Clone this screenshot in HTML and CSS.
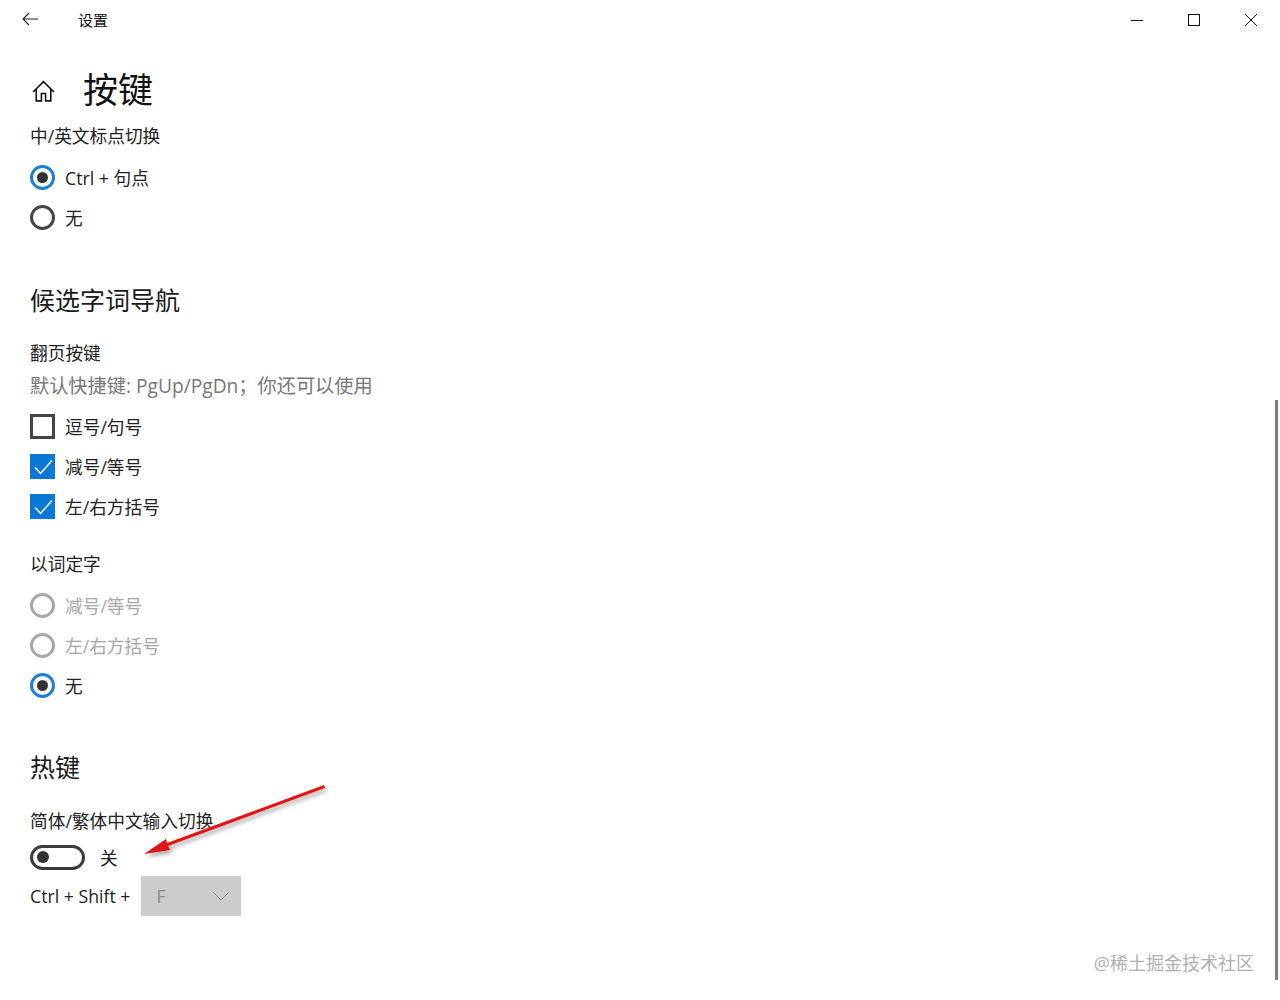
FILE: index.html
```html
<!DOCTYPE html>
<html lang="zh-CN">
<head>
  <meta charset="UTF-8">
  <title>设置</title>
  <link rel="stylesheet" href="styles.css">
</head>
<body>

<div class="window">
  <div class="titlebar">
    <svg class="back-icon" width="16" height="14" viewBox="0 0 16 14"><path d="M7 1 1 7l6 6M1 7h15" fill="none" stroke="#222" stroke-width="1.1"/></svg>
    <span class="app-name">设置</span>
    <div class="window-controls">
      <svg width="12" height="12" viewBox="0 0 12 12"><path d="M0 6.5h12" stroke="#111" stroke-width="1"/></svg>
      <svg width="12" height="12" viewBox="0 0 12 12"><rect x="0.5" y="0.5" width="11" height="11" fill="none" stroke="#111" stroke-width="1"/></svg>
      <svg width="12" height="12" viewBox="0 0 12 12"><path d="M0 0l12 12M12 0 0 12" stroke="#111" stroke-width="1"/></svg>
    </div>
  </div>

  <div class="content">
    <div class="page-header">
      <svg class="home-icon" width="25" height="25" viewBox="0 0 24 24"><path d="M2 12.500 12 2.500l10 10M5 10v11h5v-7h4v7h5V10" fill="none" stroke="#111" stroke-width="1.500"/></svg>
      <h1>按键</h1>
    </div>

    <div class="label label-group">中/英文标点切换</div>
    <div class="option"><span class="radio on"></span>Ctrl + 句点</div>
    <div class="option"><span class="radio"></span>无</div>

    <h2 class="section-first">候选字词导航</h2>
    <div class="label">翻页按键</div>
    <div class="hint">默认快捷键: PgUp/PgDn；你还可以使用</div>
    <div class="option"><span class="check"></span>逗号/句号</div>
    <div class="option"><span class="check on"><svg width="26" height="26" viewBox="0 0 26 26"><path d="M5 13.500l5.500 6L22 6.500" fill="none" stroke="#fff" stroke-width="1.500"/></svg></span>减号/等号</div>
    <div class="option"><span class="check on"><svg width="26" height="26" viewBox="0 0 26 26"><path d="M5 13.500l5.500 6L22 6.500" fill="none" stroke="#fff" stroke-width="1.500"/></svg></span>左/右方括号</div>

    <div class="label label-gap">以词定字</div>
    <div class="option disabled"><span class="radio"></span>减号/等号</div>
    <div class="option disabled"><span class="radio"></span>左/右方括号</div>
    <div class="option"><span class="radio on"></span>无</div>

    <h2 class="section-second">热键</h2>
    <div class="label">简体/繁体中文输入切换</div>
    <div class="toggle-row"><span class="toggle"></span>关</div>
    <div class="shortcut-row">
      <span>Ctrl + Shift +</span>
      <div class="select">
        <span>F</span>
        <svg width="16" height="9" viewBox="0 0 16 9"><path d="M.5.5 8 8 15.500.5" fill="none" stroke="#8a8a8a" stroke-width="1"/></svg>
      </div>
    </div>
  </div>

  <svg class="arrow" width="200" height="90" viewBox="0 0 200 90">
    <defs><filter id="arrowShadow"><feDropShadow dx="2" dy="3" stdDeviation="2" flood-color="#000" flood-opacity="0.35"/></filter></defs>
    <path d="M196 0l1 3L40 61l2 4-26 4 22-15 1 4z" fill="#e01418" filter="url(#arrowShadow)"/>
  </svg>

  <div class="scrollbar"></div>
  <div class="watermark">@稀土掘金技术社区</div>
</div>

</body>
</html>
```

FILE: styles.css
```css
* {
  box-sizing: border-box;
}

body {
  margin: 0;
  background: #fff;
  color: #222;
  font-family: "Open Sans", "Noto Sans CJK SC", sans-serif;
  font-size: 17.7px;
}

.window {
  position: relative;
  height: 1000px;
  overflow: hidden;
}

.titlebar {
  display: flex;
  align-items: center;
  height: 38px;
  padding-left: 22px;
}

.back-icon {
  margin-right: 40px;
}

.app-name {
  font-size: 15px;
  color: #111;
}

.window-controls {
  display: flex;
  gap: 45px;
  margin-top: 2px;
  margin-left: auto;
  margin-right: 23px;
}

.content {
  padding-left: 30px;
}

.page-header {
  display: flex;
  align-items: center;
  height: 72px;
  margin-top: 13px;
}

.home-icon {
  margin-top: 8px;
  margin-left: 1px;
  margin-right: 27px;
}

h1 {
  margin: 0;
  font-size: 35px;
  font-weight: 400;
  color: #111;
}

h2 {
  margin: 0;
  font-size: 25px;
  font-weight: 400;
  line-height: 36px;
  color: #1a1a1a;
}

.section-first {
  margin-top: 45px;
  margin-bottom: 22px;
}

.section-second {
  margin-top: 44px;
  margin-bottom: 23px;
}

.label {
  height: 26px;
  line-height: 26px;
}

.label-group {
  margin-bottom: 8px;
}

.label-gap {
  margin-top: 25px;
  margin-bottom: 8px;
}

.hint {
  height: 40px;
  line-height: 40px;
  font-size: 19.2px;
  color: #777;
}

.option {
  display: flex;
  align-items: center;
  height: 40px;
}

.disabled {
  color: #a6a6a6;
}

.radio {
  position: relative;
  flex: none;
  width: 25px;
  height: 25px;
  margin-right: 10px;
  border: 3px solid #444;
  border-radius: 50%;
}

.radio.on {
  border-color: #1a7fd4;
}

.radio.on::after {
  content: "";
  position: absolute;
  top: 4px;
  left: 4px;
  width: 11px;
  height: 11px;
  border-radius: 50%;
  background: #333;
}

.disabled .radio {
  border-color: #a6a6a6;
}

.check {
  flex: none;
  width: 25px;
  height: 25px;
  margin-right: 10px;
  border: 3px solid #444;
}

.check.on {
  border: 0;
  background: #0a78d7;
}

.check svg {
  display: block;
}

.toggle-row {
  display: flex;
  align-items: center;
  height: 36px;
  margin-top: 5px;
}

.toggle {
  position: relative;
  width: 55px;
  height: 25px;
  margin-right: 15px;
  border: 3px solid #3a3a3a;
  border-radius: 13px;
}

.toggle::after {
  content: "";
  position: absolute;
  top: 3.500px;
  left: 4px;
  width: 12px;
  height: 12px;
  border-radius: 50%;
  background: #333;
}

.shortcut-row {
  display: flex;
  align-items: center;
  gap: 11px;
  margin-top: 1px;
}

.select {
  display: flex;
  align-items: center;
  justify-content: space-between;
  width: 100px;
  height: 40px;
  padding: 0 12px 0 15px;
  background: #cccccc;
  color: #8a8a8a;
}

.arrow {
  position: absolute;
  left: 128px;
  top: 785px;
}

.scrollbar {
  position: absolute;
  left: 1275px;
  top: 400px;
  width: 3px;
  height: 580px;
  background: #7d7d7d;
}

.watermark {
  position: absolute;
  right: 26px;
  top: 949px;
  font-size: 18px;
  color: #b0b0b0;
}
```
